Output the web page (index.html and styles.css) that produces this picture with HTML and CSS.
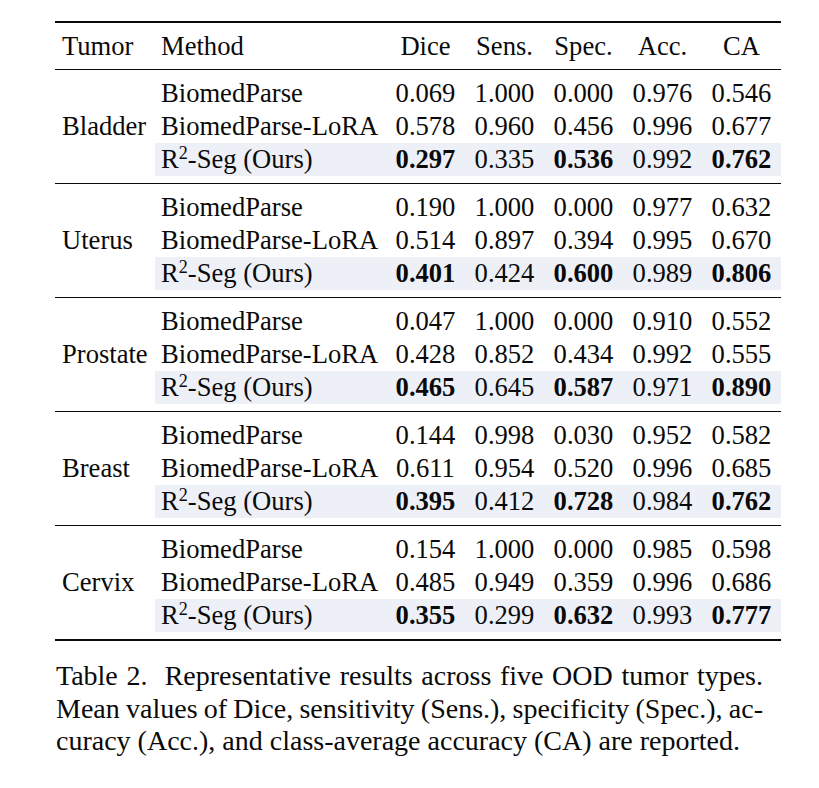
FILE: index.html
```html
<!DOCTYPE html>
<html lang="en">
<head>
<meta charset="utf-8">
<title>Table 2</title>
<link rel="stylesheet" href="styles.css">
</head>
<body>
<div class="page">
  <div class="tbl">
    <div class="head">
      <div class="c tumor">Tumor</div>
      <div class="c method">Method</div>
      <div class="c num">Dice</div>
      <div class="c num">Sens.</div>
      <div class="c num">Spec.</div>
      <div class="c num">Acc.</div>
      <div class="c num">CA</div>
    </div>

    <div class="section">
      <div class="c tumor label">Bladder</div>
      <div class="c method">BiomedParse</div>
      <div class="c num">0.069</div><div class="c num">1.000</div><div class="c num">0.000</div><div class="c num">0.976</div><div class="c num">0.546</div>
      <div class="c method">BiomedParse-LoRA</div>
      <div class="c num">0.578</div><div class="c num">0.960</div><div class="c num">0.456</div><div class="c num">0.996</div><div class="c num">0.677</div>
      <div class="c method hl">R<sup>2</sup>-Seg (Ours)</div>
      <div class="c num hl b">0.297</div><div class="c num hl">0.335</div><div class="c num hl b">0.536</div><div class="c num hl">0.992</div><div class="c num hl b">0.762</div>
    </div>

    <div class="section">
      <div class="c tumor label">Uterus</div>
      <div class="c method">BiomedParse</div>
      <div class="c num">0.190</div><div class="c num">1.000</div><div class="c num">0.000</div><div class="c num">0.977</div><div class="c num">0.632</div>
      <div class="c method">BiomedParse-LoRA</div>
      <div class="c num">0.514</div><div class="c num">0.897</div><div class="c num">0.394</div><div class="c num">0.995</div><div class="c num">0.670</div>
      <div class="c method hl">R<sup>2</sup>-Seg (Ours)</div>
      <div class="c num hl b">0.401</div><div class="c num hl">0.424</div><div class="c num hl b">0.600</div><div class="c num hl">0.989</div><div class="c num hl b">0.806</div>
    </div>

    <div class="section">
      <div class="c tumor label">Prostate</div>
      <div class="c method">BiomedParse</div>
      <div class="c num">0.047</div><div class="c num">1.000</div><div class="c num">0.000</div><div class="c num">0.910</div><div class="c num">0.552</div>
      <div class="c method">BiomedParse-LoRA</div>
      <div class="c num">0.428</div><div class="c num">0.852</div><div class="c num">0.434</div><div class="c num">0.992</div><div class="c num">0.555</div>
      <div class="c method hl">R<sup>2</sup>-Seg (Ours)</div>
      <div class="c num hl b">0.465</div><div class="c num hl">0.645</div><div class="c num hl b">0.587</div><div class="c num hl">0.971</div><div class="c num hl b">0.890</div>
    </div>

    <div class="section">
      <div class="c tumor label">Breast</div>
      <div class="c method">BiomedParse</div>
      <div class="c num">0.144</div><div class="c num">0.998</div><div class="c num">0.030</div><div class="c num">0.952</div><div class="c num">0.582</div>
      <div class="c method">BiomedParse-LoRA</div>
      <div class="c num">0.611</div><div class="c num">0.954</div><div class="c num">0.520</div><div class="c num">0.996</div><div class="c num">0.685</div>
      <div class="c method hl">R<sup>2</sup>-Seg (Ours)</div>
      <div class="c num hl b">0.395</div><div class="c num hl">0.412</div><div class="c num hl b">0.728</div><div class="c num hl">0.984</div><div class="c num hl b">0.762</div>
    </div>

    <div class="section last">
      <div class="c tumor label">Cervix</div>
      <div class="c method">BiomedParse</div>
      <div class="c num">0.154</div><div class="c num">1.000</div><div class="c num">0.000</div><div class="c num">0.985</div><div class="c num">0.598</div>
      <div class="c method">BiomedParse-LoRA</div>
      <div class="c num">0.485</div><div class="c num">0.949</div><div class="c num">0.359</div><div class="c num">0.996</div><div class="c num">0.686</div>
      <div class="c method hl">R<sup>2</sup>-Seg (Ours)</div>
      <div class="c num hl b">0.355</div><div class="c num hl">0.299</div><div class="c num hl b">0.632</div><div class="c num hl">0.993</div><div class="c num hl b">0.777</div>
    </div>
  </div>

  <div class="caption">
    <span class="line">Table 2.&nbsp; Representative results across five OOD tumor types.</span>
    <span class="line tight">Mean values of Dice, sensitivity (Sens.), specificity (Spec.), ac-</span>
    <span class="line final">curacy (Acc.), and class-average accuracy (CA) are reported.</span>
  </div>
</div>
</body>
</html>
```

FILE: styles.css
```css
html, body {
  margin: 0;
  padding: 0;
  background: #ffffff;
}

body {
  font-family: "Liberation Serif", "Times New Roman", serif;
  color: #0a0a0a;
}

.page {
  padding: 21px 0 0 55px;
}

.tbl {
  width: 726px;
  border-top: 2px solid #0a0a0a;
  border-bottom: 2px solid #0a0a0a;
}

.head,
.section {
  display: grid;
  grid-template-columns: 100px 231px repeat(5, 79px);
  font-size: 26.6px;
}

.head {
  height: 46px;
  align-items: center;
  border-bottom: 1px solid #0a0a0a;
}

.section {
  grid-template-rows: repeat(3, 33px);
  padding: 7px 0;
  border-bottom: 1px solid #0a0a0a;
}

.section.last {
  border-bottom: none;
}

.c {
  white-space: nowrap;
  line-height: 33px;
}

.tumor {
  padding-left: 7px;
}

.label {
  grid-column: 1;
  grid-row: 1 / span 3;
  align-self: center;
}

.method {
  grid-column: 2;
  padding-left: 6px;
}

.num {
  text-align: center;
}

.hl {
  background: #eef0f8;
}

.b {
  font-weight: bold;
}

sup {
  font-size: 0.68em;
  line-height: 0;
  vertical-align: 0.5em;
}

.caption {
  width: 707px;
  margin-top: 19px;
  margin-left: 1px;
  font-size: 28px;
  line-height: 32.5px;
}

.line {
  display: block;
  text-align: justify;
  text-align-last: justify;
  white-space: nowrap;
}

.line.tight {
  word-spacing: -1.5px;
}

.line.final {
  text-align-last: left;
}
```
